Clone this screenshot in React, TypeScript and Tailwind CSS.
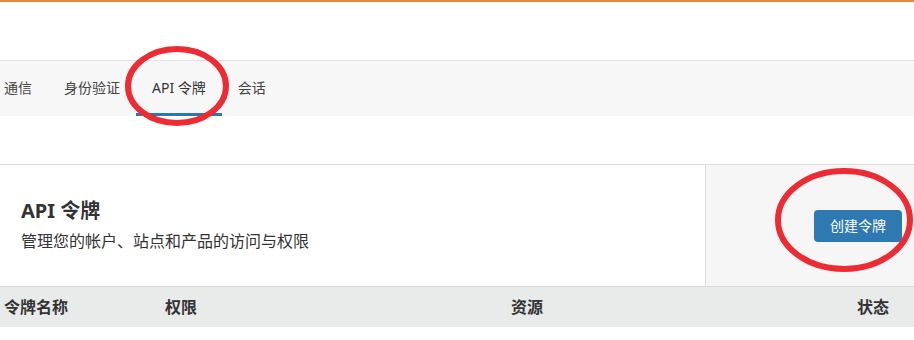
const tabs = ["通信", "身份验证", "API 令牌", "会话"];
const columns = ["令牌名称", "权限", "资源", "状态"];

export default function App() {
  return (
    <div
      className="relative h-[340px] w-[914px] overflow-hidden bg-white text-[#333]"
      style={{ fontFamily: '"Noto Sans", "Noto Sans CJK SC", sans-serif' }}
    >
      {/* top accent */}
      <div className="h-[2px] bg-[#e38a3c]" />
      <div className="h-[58px]" />

      {/* tabs */}
      <nav className="flex h-[56px] border-t border-[#e3e3e3] bg-[#f7f7f7]">
        <div className="-ml-3 flex">
          {tabs.map((t) => {
            const active = t === "API 令牌";
            return (
              <div
                key={t}
                className={
                  "flex items-center border-b-[3px] px-4 pt-[1px] text-[14px] leading-5 " +
                  (active ? "border-[#2d77b1] text-[#333]" : "border-transparent text-[#444]")
                }
              >
                {t}
              </div>
            );
          })}
        </div>
      </nav>

      <div className="h-[48px]" />

      {/* card */}
      <section className="flex h-[122px] border-t border-[#dcdcdc]">
        <div className="flex-1 pl-[21px] pt-8">
          <h1 className="text-[20px] font-bold leading-7 text-[#333]">API 令牌</h1>
          <p className="mt-[4px] text-[16px] leading-6 text-[#333]">管理您的帐户、站点和产品的访问与权限</p>
        </div>
        <div className="flex w-[209px] items-center justify-end border-l border-[#dcdcdc] bg-[#f6f6f6] pr-3">
          <button className="h-8 w-[88px] rounded-[4px] bg-[#2f79b3] text-[14px] text-white">创建令牌</button>
        </div>
      </section>

      {/* table header */}
      <div className="grid h-[41px] grid-cols-[161px_346px_346px_1fr] items-center border-t border-[#d8d8d8] bg-[#e9eaea] pl-1 text-[16px] font-bold text-[#333]">
        {columns.map((c) => (
          <div key={c}>{c}</div>
        ))}
      </div>

      {/* annotation marks */}
      <svg className="pointer-events-none absolute left-0 top-0" width="914" height="340">
        <ellipse cx="177" cy="86" rx="49" ry="37" fill="none" stroke="#ec2b33" strokeWidth="6" />
        <ellipse cx="844" cy="220" rx="66" ry="49" fill="none" stroke="#ec2b33" strokeWidth="6" />
      </svg>
    </div>
  );
}
